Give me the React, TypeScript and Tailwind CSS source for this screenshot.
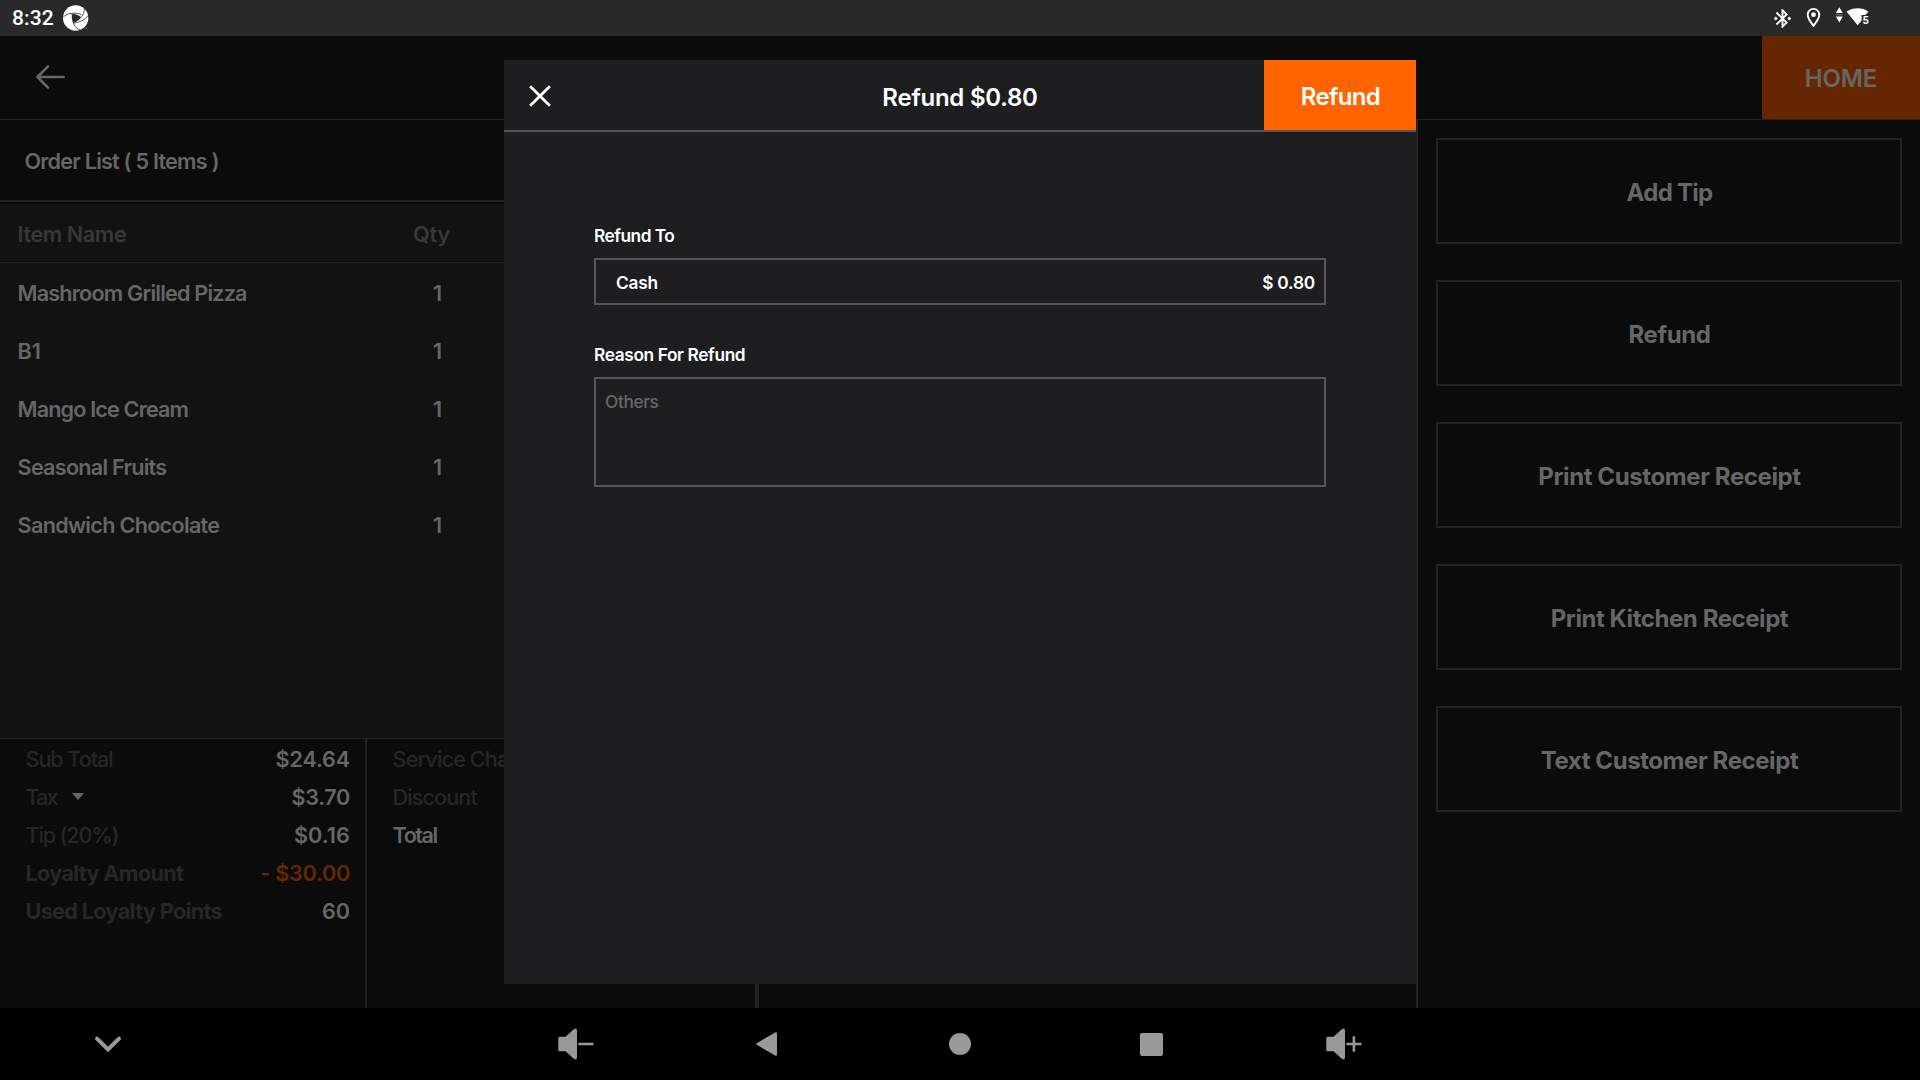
import React from "react";

const orderItems = [
  { name: "Mashroom Grilled Pizza", qty: 1, tracking: "tracking-[-0.8px]" },
  { name: "B1", qty: 1, tracking: "tracking-[0px]" },
  { name: "Mango Ice Cream", qty: 1, tracking: "tracking-[-0.84px]" },
  { name: "Seasonal Fruits", qty: 1, tracking: "tracking-[-0.75px]" },
  { name: "Sandwich Chocolate", qty: 1, tracking: "tracking-[-0.7px]" },
];

const totals = [
  { label: "Sub Total", value: "$24.64", labelStyle: "font-medium tracking-[-1.05px]", valueStyle: "font-semibold tracking-[-0.15px] text-[#666]" },
  { label: "Tax", value: "$3.70", caret: true, labelStyle: "font-medium tracking-[-1.9px]", valueStyle: "font-semibold tracking-[-0.3px] text-[#666]" },
  { label: "Tip (20%)", value: "$0.16", labelStyle: "font-medium tracking-[-1.15px]", valueStyle: "font-semibold tracking-[0.1px] text-[#666]" },
  { label: "Loyalty Amount", value: "- $30.00", labelStyle: "font-bold tracking-[-0.65px]", valueStyle: "font-semibold tracking-[-0.23px] text-[#662700]" },
  { label: "Used Loyalty Points", value: "60", labelStyle: "font-bold tracking-[-0.64px]", valueStyle: "font-semibold text-[#666]" },
];

const actions = [
  { label: "Add Tip", tracking: "tracking-[-0.74px]" },
  { label: "Refund", tracking: "tracking-[-0.4px]" },
  { label: "Print Customer Receipt", tracking: "tracking-[-0.4px]" },
  { label: "Print Kitchen Receipt", tracking: "tracking-[-0.43px]" },
  { label: "Text Customer Receipt", tracking: "tracking-[-0.42px]" },
];

function ApertureIcon() {
  return (
    <svg className="mb-[1px] ml-[9px] h-[26px] w-[26px]" viewBox="0 0 78 78" fill="none">
      <circle cx="38" cy="39" r="38" fill="#fff" />
      <path d="M28 26 C36 26 48 30 54 37 C51 44 40 52 31 53 C27 45 26 35 28 26Z" fill="#292929" />
      <g stroke="#292929" strokeWidth="2.4">
        <path d="M1 36 C12 25 34 20 56 29" />
        <path d="M62 4 C67 14 62 29 53 38" />
        <path d="M77 30 C67 44 48 54 30 54" />
        <path d="M52 74 C38 72 28 58 27 26" />
      </g>
      <rect x="68" y="68" width="4" height="3" fill="#999" />
    </svg>
  );
}

function StatusBar() {
  return (
    <div className="flex h-9 shrink-0 items-center bg-[#292929] pl-[12px] pr-[49px]">
      <span className="mt-[1px] font-['Roboto'] text-[21px] font-medium leading-none tracking-[0.1px] text-white">8:32</span>
      <ApertureIcon />
      <div className="ml-auto flex items-center text-white">
        <svg className="h-[23px] w-[23px]" viewBox="0 0 24 24" fill="currentColor">
          <path d="M7 12l-2-2-2 2 2 2 2-2zm10.71-4.29L12 2h-1v7.59L6.41 5 5 6.41 10.59 12 5 17.59 6.41 19 11 14.41V22h1l5.71-5.71-4.3-4.29 4.3-4.29zM13 5.83l1.88 1.88L13 9.59V5.83zm1.88 10.46L13 18.17v-3.76l1.88 1.88zM19 10l-2 2 2 2 2-2-2-2z" />
        </svg>
        <svg className="mb-px ml-[8px] h-[23px] w-[23px]" viewBox="0 0 24 24" fill="currentColor">
          <path d="M12 2C8.13 2 5 5.13 5 9c0 5.25 7 13 7 13s7-7.75 7-13c0-3.87-3.13-7-7-7zM7 9c0-2.76 2.24-5 5-5s5 2.24 5 5c0 2.88-2.88 7.19-5 9.88C9.92 16.21 7 11.85 7 9z" />
          <circle cx="12" cy="9" r="2.5" />
        </svg>
        <svg className="mb-[2px] ml-[10px] h-5 w-[36px]" viewBox="0 0 36 20">
          <path d="M0.8 6 L4.3 0.2 L7.8 6Z M0.8 9.6 L4.3 15.4 L7.8 9.6Z" fill="#fff" />
          <path d="M0.8 7.8 H7.8" stroke="#777" strokeWidth="1" />
          <path d="M11.5 4.6 C18 0 27.5 0 33.4 4.6 L30.6 8 H26.6 V13.4 L22.6 18.2Z" fill="#fff" />
          <text x="27.6" y="17.2" fill="#fff" fontFamily="Roboto" fontWeight="700" fontSize="11">5</text>
        </svg>
      </div>
    </div>
  );
}

function OrderPanel() {
  return (
    <div className="flex w-[1416px] flex-col">
      <div className="flex h-[80px] items-center pl-[24.5px] pt-[4px] text-[21.6px] font-semibold tracking-[-0.79px] text-[#666]">
        Order List ( 5 Items )
      </div>
      <div className="h-[2px] bg-[#222]" />
      <div className="mt-[2px] flex h-[59px] items-center border-b border-[#222] bg-[#121212] pl-[17.5px] pt-[4px] font-semibold text-[#383838]">
        <span className="w-[395.5px] tracking-[-0.4px]">Item Name</span>
        <span className="tracking-[-0.14px]">Qty</span>
      </div>
      <div className="flex h-[475px] flex-col bg-[#121212] pt-[2px]">
        {orderItems.map((item) => (
          <div key={item.name} className="flex h-[58px] items-center pl-[17.6px] font-semibold text-[#666]">
            <span className={`w-[415.4px] ${item.tracking}`}>{item.name}</span>
            <span>{item.qty}</span>
          </div>
        ))}
      </div>
      <div className="flex flex-1 border-t border-[#222]">
        <div className="w-[367px] border-r-2 border-[#222] pl-[25.5px] pr-[15px] pt-[2px] text-[#262626]">
          {totals.map((row) => (
            <div key={row.label} className="flex h-[38px] items-center">
              <span className={row.labelStyle}>{row.label}</span>
              {row.caret && <span className="mb-[4px] ml-[15px] border-x-[6px] border-t-[7px] border-x-transparent border-t-[#666]" />}
              <span className={`ml-auto ${row.valueStyle}`}>{row.value}</span>
            </div>
          ))}
        </div>
        <div className="w-[392px] border-r-4 border-[#222] pl-[25.6px] pt-[2px] text-[#262626]">
          <div className="flex h-[38px] items-center font-medium tracking-[-0.85px]">Service Charge</div>
          <div className="flex h-[38px] items-center font-medium tracking-[-0.9px]">Discount</div>
          <div className="flex h-[38px] items-center font-semibold tracking-[-1.5px] text-[#666]">Total</div>
        </div>
      </div>
    </div>
  );
}

function ActionsPanel() {
  return (
    <div className="flex flex-1 flex-col gap-9 border-l-2 border-[#222] pl-[18px] pr-[18px] pt-[18px]">
      {actions.map((action) => (
        <button key={action.label} className={`h-[106px] border-2 border-[#222] pl-px pt-[4px] text-2xl font-bold text-[#666] ${action.tracking}`}>
          {action.label}
        </button>
      ))}
    </div>
  );
}

function RefundDialog() {
  return (
    <div className="absolute left-[504px] top-[60px] flex h-[924px] w-[912px] flex-col bg-[#1e1e20] text-white">
      <div className="grid h-[72px] grid-cols-[152px_1fr_152px] border-b-2 border-[#555]">
        <div className="flex items-center pl-[25px] pt-[2px]">
          <svg className="h-[22px] w-[22px]" viewBox="0 0 22 22" stroke="#fff" strokeWidth="2.8">
            <path d="M1.2 1.2 L20.8 20.8 M20.8 1.2 L1.2 20.8" />
          </svg>
        </div>
        <div className="flex items-center justify-center pt-[6px] text-2xl font-semibold tracking-[-0.25px]">Refund $0.80</div>
        <button className="bg-[#ff6400] pb-px pl-px pt-[4px] text-2xl font-semibold tracking-[-0.65px]">Refund</button>
      </div>
      <div className="px-[90px] pt-[91px] text-[17.3px] font-semibold">
        <div className="flex h-[26px] items-center tracking-[-0.5px]">Refund To</div>
        <div className="mt-[9px] flex h-[47px] items-center justify-between border-2 border-[#555] pl-[20px] pr-[9px] pt-[2px]">
          <span className="tracking-[-0.2px]">Cash</span>
          <span className="tracking-[-0.2px]">$ 0.80</span>
        </div>
        <div className="mt-[37px] flex h-[26px] items-center tracking-[-0.37px]">Reason For Refund</div>
        <div className="mt-[9px] h-[110px] border-2 border-[#555] pl-[9px] pt-[10px] font-medium leading-[26px] tracking-[-0.37px] text-[#666]">Others</div>
      </div>
    </div>
  );
}

function Speaker({ plus }: { plus?: boolean }) {
  return (
    <svg className="h-8 w-9" viewBox="0 0 36 32" fill="#999">
      <path d="M0.3 10.2 Q0.3 8.7 1.8 8.7 H7.5 L15.8 1.2 Q19 -0.4 19 2.4 V29.6 Q19 32.4 15.8 30.8 L7.5 23.3 H1.8 Q0.3 23.3 0.3 21.8Z" />
      <rect x="20.4" y="14.7" width="15" height="2.6" rx="0.6" />
      {plus && <rect x="26.6" y="8.3" width="2.6" height="15.4" rx="0.6" />}
    </svg>
  );
}

function NavBar() {
  return (
    <div className="flex h-[72px] shrink-0 bg-black pl-[12px]">
      <div className="mr-[276px] flex w-48 items-center justify-center">
        <svg className="h-[18px] w-7" viewBox="0 0 28 18" fill="none" stroke="#999" strokeWidth="4" strokeLinecap="round">
          <path d="M3 3.6 L14 14.4 L25 3.6" />
        </svg>
      </div>
      <div className="flex w-48 items-center justify-center"><Speaker /></div>
      <div className="flex w-48 items-center justify-center">
        <svg className="mr-[3px] h-6 w-[21px]" viewBox="0 0 21 24" fill="#999" stroke="#999" strokeWidth="2" strokeLinejoin="round">
          <path d="M1.2 12 L20 1.2 V22.8Z" />
        </svg>
      </div>
      <div className="flex w-48 items-center justify-center"><div className="h-[22px] w-[22px] rounded-full bg-[#999]" /></div>
      <div className="flex w-48 items-center justify-center pr-px"><div className="h-[23px] w-[23px] rounded-[2px] bg-[#999]" /></div>
      <div className="flex w-48 items-center justify-center"><Speaker plus /></div>
    </div>
  );
}

export default function App() {
  return (
    <div className="relative flex h-[1080px] w-[1920px] flex-col overflow-hidden bg-[#0b0b0b] font-['Inter',sans-serif] text-[21.6px] leading-none">
      <StatusBar />
      <div className="flex h-[84px] shrink-0 items-center border-b border-[#222] pl-[36px]">
        <svg className="mt-[-1px] h-6 w-[29px]" viewBox="0 0 29 24" fill="none" stroke="#666" strokeWidth="2.6" strokeLinecap="round" strokeLinejoin="round">
          <path d="M27.6 12 H1.4 M12 1.4 L1.4 12 L12 22.6" />
        </svg>
        <button className="ml-auto h-full w-[158px] bg-[#662700] pt-[3px] text-2xl font-semibold tracking-[-0.16px] text-[#666]">HOME</button>
      </div>
      <div className="flex min-h-0 flex-1">
        <OrderPanel />
        <ActionsPanel />
      </div>
      <NavBar />
      <RefundDialog />
    </div>
  );
}
